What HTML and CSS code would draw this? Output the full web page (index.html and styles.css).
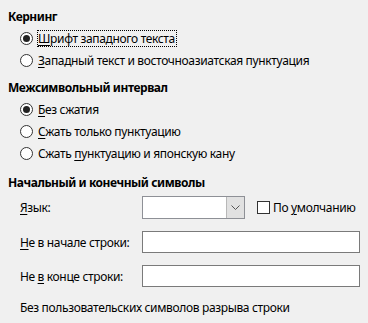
FILE: index.html
```html
<!DOCTYPE html>
<html lang="ru">
<head>
  <meta charset="UTF-8" />
  <title>Азиатская типографика</title>
  <link rel="stylesheet" href="styles.css">
</head>
<body>

  <div class="section first">
    <h3 class="heading">Кернинг</h3>
    <label class="radio-row">
      <span class="radio checked"></span>
      <span class="focus"><u>Ш</u>рифт западного текста</span>
    </label>
    <label class="radio-row">
      <span class="radio"></span>
      <span><u>З</u>ападный текст и восточноазиатская пунктуация</span>
    </label>
  </div>

  <div class="section">
    <h3 class="heading">Межсимвольный интервал</h3>
    <label class="radio-row">
      <span class="radio checked"></span>
      <span><u>Б</u>ез сжатия</span>
    </label>
    <label class="radio-row">
      <span class="radio"></span>
      <span><u>С</u>жать только пунктуацию</span>
    </label>
    <label class="radio-row">
      <span class="radio"></span>
      <span>Сжать <u>п</u>унктуацию и японскую кану</span>
    </label>
  </div>

  <div class="section last">
    <h3 class="heading">Начальный и конечный символы</h3>
    <div class="form-row combo-row">
      <span class="label"><u>Я</u>зык:</span>
      <div class="combo">
        <div class="combo-field"></div>
        <div class="combo-btn">
          <svg width="9" height="6" viewBox="0 0 9 6"><path d="M0.5 0.5 L4.5 4.5 L8.5 0.5" fill="none" stroke="#555" stroke-width="1"/></svg>
        </div>
      </div>
      <label class="check-row">
        <span class="checkbox"></span>
        <span>По <u>у</u>молчанию</span>
      </label>
    </div>
    <div class="form-row">
      <span class="label"><u>Н</u>е в начале строки:</span>
      <div class="text-field"></div>
    </div>
    <div class="form-row">
      <span class="label">Не <u>в</u> конце строки:</span>
      <div class="text-field"></div>
    </div>
    <p class="note">Без пользовательских символов разрыва строки</p>
  </div>

</body>
</html>
```

FILE: styles.css
```css
body {
  margin: 0;
  padding: 6px 8px 0 8px;
  background-color: #f0f0f0;
  font-family: "Noto Sans", "Open Sans", sans-serif;
  font-size: 12px;
  letter-spacing: -0.35px;
  color: #000;
}
u { text-decoration: underline; text-underline-offset: 2px; }

.section { display: flex; flex-direction: column; }
.section + .section { margin-top: 6px; }
.section.last { margin-top: 8px; }

.heading {
  margin: 0;
  height: 21px;
  line-height: 21px;
  font-size: 12px;
  font-weight: bold;
  letter-spacing: -0.45px;
}

.radio-row {
  display: flex;
  align-items: center;
  height: 22px;
  padding-left: 12px;
}
.radio {
  width: 13px;
  height: 13px;
  box-sizing: border-box;
  border: 1px solid #333;
  border-radius: 50%;
  background: #fff;
  margin-right: 5px;
  display: flex;
  align-items: center;
  justify-content: center;
}
.radio.checked::after {
  content: "";
  width: 7px;
  height: 7px;
  border-radius: 50%;
  background: #222;
}
.focus {
  outline: 1px dotted #000;
  outline-offset: 0;
  padding-right: 1px;
  line-height: 15px;
}

.form-row {
  display: flex;
  align-items: center;
  height: 22px;
  padding-left: 12px;
  margin-top: 12px;
}
.form-row.combo-row { height: 23px; margin-top: 3px; }
.label { width: 122px; }

.combo {
  display: flex;
  width: 103px;
  height: 23px;
  box-sizing: border-box;
  border: 1px solid #8e9096;
  background: #fff;
}
.combo-field { flex: 1; }
.combo-btn {
  width: 17px;
  background: #e1e1e1;
  border-left: 1px solid #b8b8b8;
  display: flex;
  align-items: center;
  justify-content: center;
}

.check-row {
  display: flex;
  align-items: center;
  margin-left: 12px;
}
.checkbox {
  width: 13px;
  height: 13px;
  box-sizing: border-box;
  border: 1px solid #333;
  background: #fff;
  margin-right: 3px;
}

.text-field {
  width: 218px;
  height: 22px;
  box-sizing: border-box;
  border: 1px solid #7a7a7a;
  background: #fff;
}

.note {
  margin: 10px 0 0 12px;
  height: 22px;
  line-height: 22px;
}
```
